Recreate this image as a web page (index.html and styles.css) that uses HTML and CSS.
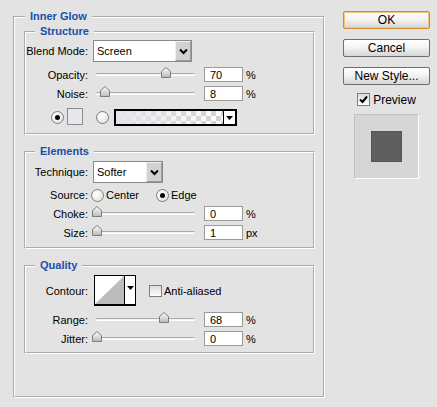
FILE: index.html
```html
<!DOCTYPE html>
<html lang="en">
<head>
  <meta charset="UTF-8">
  <title>Layer Style - Inner Glow</title>
  <link rel="stylesheet" href="styles.css">
</head>
<body>
  <div class="dialog">
    <fieldset class="group">
      <legend>Inner Glow</legend>

      <fieldset class="sub structure">
        <legend>Structure</legend>
        <div class="row">
          <span class="lbl">Blend Mode:</span>
          <div class="select blend">
            <span class="select-text">Screen</span>
            <span class="select-btn"><svg width="9" height="7" viewBox="0 0 9 7"><polyline points="1,1.5 4.5,5 8,1.5" fill="none" stroke="#000" stroke-width="2"/></svg></span>
          </div>
        </div>
        <div class="row slider-row first">
          <span class="lbl">Opacity:</span>
          <div class="slider"><div class="track"></div><svg class="thumb" style="left:65px" width="10" height="11" viewBox="0 0 10 11"><defs><linearGradient id="tg" x1="0" y1="0" x2="0" y2="1"><stop offset="0" stop-color="#fff"/><stop offset="1" stop-color="#b8b8b8"/></linearGradient></defs><polygon points="0.5,4.5 5,0.5 9.5,4.5 9.5,10.5 0.5,10.5" fill="url(#tg)" stroke="#7c7c7c"/></svg></div>
          <input class="num" type="text" value="70"><span class="unit">%</span>
        </div>
        <div class="row slider-row">
          <span class="lbl">Noise:</span>
          <div class="slider"><div class="track"></div><svg class="thumb" style="left:4px" width="10" height="11" viewBox="0 0 10 11"><polygon points="0.5,4.5 5,0.5 9.5,4.5 9.5,10.5 0.5,10.5" fill="url(#tg)" stroke="#7c7c7c"/></svg></div>
          <input class="num" type="text" value="8"><span class="unit">%</span>
        </div>
        <div class="row color-row">
          <span class="radio checked"></span>
          <span class="swatch"></span>
          <span class="radio radio-grad"></span>
          <div class="gradient">
            <span class="gradient-fill"></span>
            <span class="gradient-btn"><svg width="7" height="4" viewBox="0 0 7 4"><polygon points="0,0 7,0 3.5,4" fill="#000"/></svg></span>
          </div>
        </div>
      </fieldset>

      <fieldset class="sub elements">
        <legend>Elements</legend>
        <div class="row">
          <span class="lbl">Technique:</span>
          <div class="select technique">
            <span class="select-text">Softer</span>
            <span class="select-btn"><svg width="9" height="7" viewBox="0 0 9 7"><polyline points="1,1.5 4.5,5 8,1.5" fill="none" stroke="#000" stroke-width="2"/></svg></span>
          </div>
        </div>
        <div class="row source-row">
          <span class="lbl">Source:</span>
          <span class="radio"></span><span class="opt">Center</span>
          <span class="radio checked edge"></span><span class="opt">Edge</span>
        </div>
        <div class="row slider-row">
          <span class="lbl">Choke:</span>
          <div class="slider"><div class="track"></div><svg class="thumb" style="left:-4px" width="10" height="11" viewBox="0 0 10 11"><polygon points="0.5,4.5 5,0.5 9.5,4.5 9.5,10.5 0.5,10.5" fill="url(#tg)" stroke="#7c7c7c"/></svg></div>
          <input class="num" type="text" value="0"><span class="unit">%</span>
        </div>
        <div class="row slider-row">
          <span class="lbl">Size:</span>
          <div class="slider"><div class="track"></div><svg class="thumb" style="left:-4px" width="10" height="11" viewBox="0 0 10 11"><polygon points="0.5,4.5 5,0.5 9.5,4.5 9.5,10.5 0.5,10.5" fill="url(#tg)" stroke="#7c7c7c"/></svg></div>
          <input class="num" type="text" value="1"><span class="unit">px</span>
        </div>
      </fieldset>

      <fieldset class="sub quality">
        <legend>Quality</legend>
        <div class="row">
          <span class="lbl">Contour:</span>
          <div class="contour">
            <svg class="curve" width="29" height="28" viewBox="0 0 29 28"><rect width="29" height="28" fill="#fff"/><polygon points="0,28 29,0 29,28" fill="#bcbcbc"/></svg>
            <span class="contour-btn"><svg width="7" height="4" viewBox="0 0 7 4"><polygon points="0,0 7,0 3.5,4" fill="#000"/></svg></span>
          </div>
          <span class="check"></span><span class="opt">Anti-aliased</span>
        </div>
        <div class="row slider-row range">
          <span class="lbl">Range:</span>
          <div class="slider"><div class="track"></div><svg class="thumb" style="left:63px" width="10" height="11" viewBox="0 0 10 11"><polygon points="0.5,4.5 5,0.5 9.5,4.5 9.5,10.5 0.5,10.5" fill="url(#tg)" stroke="#7c7c7c"/></svg></div>
          <input class="num" type="text" value="68"><span class="unit">%</span>
        </div>
        <div class="row slider-row">
          <span class="lbl">Jitter:</span>
          <div class="slider"><div class="track"></div><svg class="thumb" style="left:-4px" width="10" height="11" viewBox="0 0 10 11"><polygon points="0.5,4.5 5,0.5 9.5,4.5 9.5,10.5 0.5,10.5" fill="url(#tg)" stroke="#7c7c7c"/></svg></div>
          <input class="num" type="text" value="0"><span class="unit">%</span>
        </div>
      </fieldset>
    </fieldset>

    <div class="side">
      <button class="btn ok">OK</button>
      <button class="btn">Cancel</button>
      <button class="btn last">New Style...</button>
      <label class="preview-toggle"><span class="check on"><svg width="11" height="11" viewBox="0 0 11 11"><polyline points="2,5.5 4.5,8 9,2.5" fill="none" stroke="#000" stroke-width="2"/></svg></span>Preview</label>
      <div class="preview"><div class="preview-square"></div></div>
    </div>
  </div>
</body>
</html>
```

FILE: styles.css
```css
* {
  box-sizing: border-box;
}
body {
  margin: 0;
  background: #e3e3e3;
  font-family: "Liberation Sans", Arial, sans-serif;
  font-size: 11px;
  color: #000;
}
.dialog {
  display: flex;
  align-items: flex-start;
  padding: 10px 0 0 13px;
}

/* group boxes */
fieldset {
  margin: 0;
  border: 2px groove #fff;
}
legend {
  font-weight: bold;
  color: #1b4ea8;
  line-height: 13px;
  padding: 0 5px;
}
.group {
  width: 312px;
  padding: 2px 8px 42px 9px;
}
.group > legend {
  margin-left: 1px;
}
.sub {
  padding: 2px 0 7px 0;
  min-width: 0;
}
.sub > legend {
  margin-left: 9px;
}
.elements,
.quality {
  margin-top: 10px;
}
.elements {
  padding-top: 3px;
}
.quality {
  padding-top: 3px;
  padding-bottom: 6px;
}

/* rows */
.row {
  display: flex;
  align-items: center;
}
.lbl {
  width: 62px;
  text-align: right;
  flex-shrink: 0;
}
.slider-row {
  height: 15px;
  margin-top: 4px;
}
.slider-row.first {
  margin-top: 5px;
}
.range {
  margin-top: 6px;
}
.source-row {
  height: 14px;
  margin-top: 5px;
}
.color-row {
  height: 18px;
  margin-top: 7px;
}

/* dropdowns */
.select {
  display: flex;
  height: 22px;
  margin-left: 5px;
  border: 1px solid #8a8a8a;
  background: #fff;
}
.blend {
  width: 99px;
}
.technique {
  width: 70px;
}
.select-text {
  flex: 1;
  padding-left: 3px;
  line-height: 21px;
}
.select-btn {
  width: 16px;
  display: flex;
  align-items: center;
  justify-content: center;
  background: #d2d2d2;
  border: 1px solid;
  border-color: #f0f0f0 #9a9a9a #9a9a9a #f0f0f0;
}

/* sliders */
.slider {
  position: relative;
  width: 99px;
  height: 15px;
  margin-left: 8px;
}
.track {
  margin-top: 6px;
  height: 3px;
  border-radius: 2px;
  border-top: 1px solid #a8a8a8;
  border-bottom: 1px solid #fff;
  background: #f2f2f2;
}
.thumb {
  position: absolute;
  top: 0;
}
.num {
  width: 39px;
  height: 15px;
  margin: 0 0 0 9px;
  padding: 0 0 0 5px;
  border: 1px solid #9a9a9a;
  background: #fff;
  font: 11px "Liberation Sans", Arial, sans-serif;
  color: #000;
}
.unit {
  margin-left: 3px;
}

/* radios, checks, swatches */
.radio {
  width: 13px;
  height: 13px;
  border-radius: 50%;
  border: 1px solid #7d7d7d;
  background: radial-gradient(circle at 40% 35%, #fff, #dcdcdc);
  display: flex;
  align-items: center;
  justify-content: center;
  flex-shrink: 0;
}
.radio.checked::after {
  content: "";
  width: 5px;
  height: 5px;
  border-radius: 50%;
  background: #000;
}
.color-row .radio {
  margin-left: 25px;
}
.swatch {
  width: 16px;
  height: 17px;
  margin: 0 0 1px 3px;
  border: 1px solid #8c8c8c;
  background: #e6e8ec;
}
.color-row .radio-grad {
  margin-left: 13px;
}
.gradient {
  display: flex;
  width: 123px;
  height: 17px;
  margin: 1px 0 0 5px;
  border: 2px solid #000;
}
.gradient-fill {
  flex: 1;
  background:
    linear-gradient(to right, #e4e6ea, rgba(228, 230, 234, 0)),
    repeating-conic-gradient(#d2d2d2 0 25%, #fff 0 50%) 0 0 / 10px 10px;
}
.gradient-btn {
  width: 12px;
  display: flex;
  align-items: center;
  justify-content: center;
  border-left: 1px solid #000;
  background: #fff;
}
.source-row .radio {
  margin-left: 3px;
}
.source-row .edge {
  margin-left: 17px;
}
.opt {
  margin-left: 2px;
}
.check {
  width: 13px;
  height: 13px;
  border: 1px solid #7d7d7d;
  background: linear-gradient(#dcdcdc, #fff);
  display: inline-flex;
  align-items: center;
  justify-content: center;
  flex-shrink: 0;
}
.quality .check {
  margin-left: 13px;
  height: 12px;
}

/* contour picker */
.contour {
  display: flex;
  height: 31px;
  width: 42px;
  margin-left: 6px;
  border: 1px solid #000;
  border-bottom-width: 2px;
  background: #fff;
}
.curve {
  display: block;
}
.contour-btn {
  flex: 1;
  display: flex;
  align-items: center;
  justify-content: center;
  border-left: 1px solid #000;
  padding-bottom: 4px;
}

/* right column */
.side {
  width: 87px;
  margin-left: 18px;
  padding-top: 1px;
  display: flex;
  flex-direction: column;
  align-items: center;
}
.btn {
  width: 87px;
  height: 18px;
  margin-bottom: 10px;
  padding: 0;
  border: 1px solid #6e6e6e;
  border-radius: 2px;
  background: linear-gradient(#fff, #f4f4f4 45%, #d6d6d6);
  font: 12px "Liberation Sans", Arial, sans-serif;
  color: #000;
}
.btn.ok {
  border-color: #d48a2a;
  box-shadow: inset 0 0 0 1px #f7c47a;
}
.btn.last {
  margin-bottom: 7px;
}
.preview-toggle {
  display: flex;
  align-items: center;
  gap: 3px;
  height: 15px;
  font-size: 12px;
}
.preview {
  width: 65px;
  height: 65px;
  margin-top: 7px;
  border: 1px solid;
  border-color: #c2c2c2 #fff #fff #c2c2c2;
  background: #d6d6d6;
  display: flex;
  align-items: center;
  justify-content: center;
}
.preview-square {
  width: 31px;
  height: 31px;
  background: #5f5f5f;
  border: 1px solid #555;
}
```
